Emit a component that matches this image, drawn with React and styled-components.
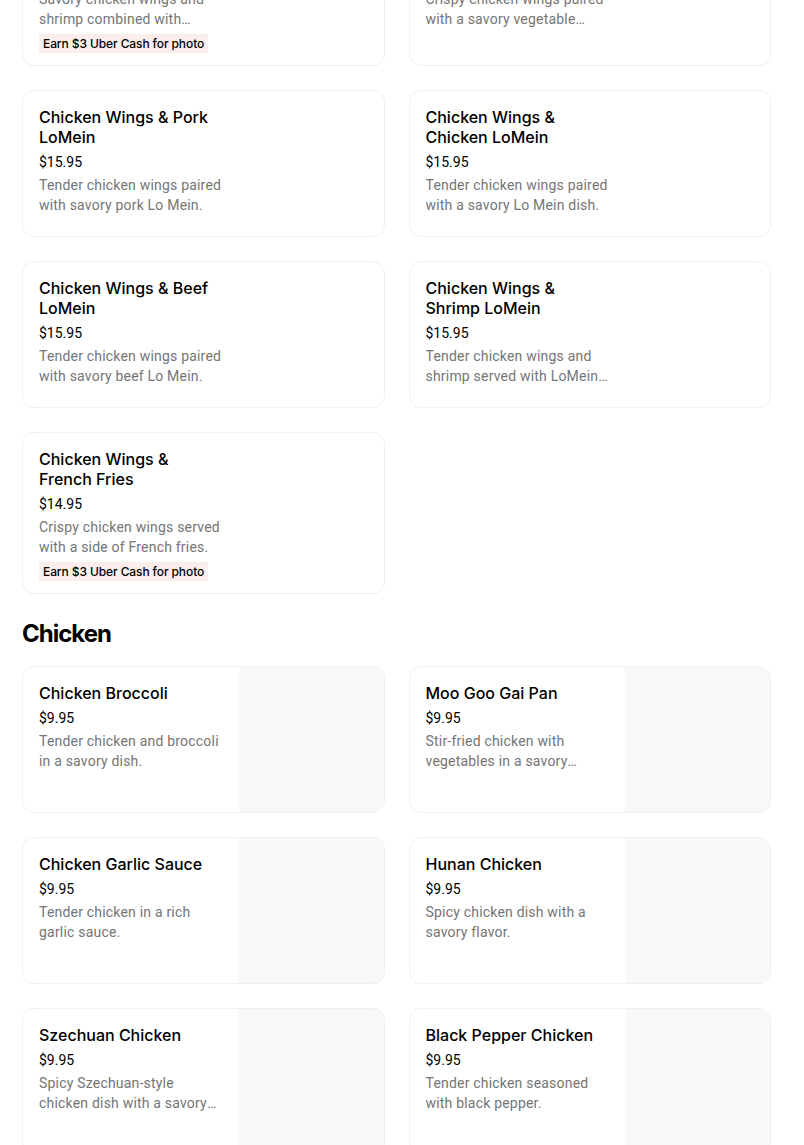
import styled, { createGlobalStyle } from "styled-components";

const GlobalStyle = createGlobalStyle`
  body {
    margin: 0;
    background: #ffffff;
    font-family: Inter, "Noto Sans", "Liberation Sans", sans-serif;
    color: #000000;
  }
`;

const Page = styled.div`
  padding: 0 33px 0 22px;
  margin-top: -96px;
`;

const Grid = styled.div`
  display: grid;
  grid-template-columns: 1fr 1fr;
  gap: 24px;
`;

const SectionTitle = styled.h2`
  margin: 24px 0 16px;
  font-size: 24px;
  line-height: 32px;
  font-weight: 700;
  letter-spacing: -1px;
`;

const Card = styled.div`
  display: grid;
  grid-template-columns: 1fr 145px;
  border: 1px solid #f0f0f0;
  border-radius: 12px;
  overflow: hidden;
  background: #ffffff;
`;

const Info = styled.div`
  display: flex;
  flex-direction: column;
  align-items: flex-start;
  gap: 4px;
  padding: 16px 16px 21px;
  min-width: 0;
`;

const Title = styled.div`
  font-size: 16px;
  line-height: 20px;
  font-weight: 500;
  color: #000000;
`;

const Price = styled.div`
  margin-top: 1px;
  font-family: Roboto, "Liberation Sans", sans-serif;
  font-size: 14px;
  line-height: 20px;
  color: #000000;
`;

const Desc = styled.div`
  margin-top: -1px;
  font-family: Roboto, "Liberation Sans", sans-serif;
  font-size: 14px;
  line-height: 20px;
  letter-spacing: 0.2px;
  color: #757575;
  display: -webkit-box;
  -webkit-line-clamp: 2;
  -webkit-box-orient: vertical;
  overflow: hidden;
`;

const Badge = styled.span`
  margin: 1px 0 -9px;
  padding: 0 4px;
  font-size: 12px;
  line-height: 19px;
  font-weight: 500;
  letter-spacing: -0.1px;
  background: #fdeeee;
  color: #000000;
`;

const Photo = styled.div`
  background: #f8f8f8;
  aspect-ratio: 1 / 1;
`;

const wings = [
  {
    title: "Chicken Wings & Shrimp Fried Rice",
    price: "$15.95",
    desc: "Savory chicken wings and shrimp combined with vegetable fried rice.",
    badge: true,
  },
  {
    title: "Chicken Wings & Vegetable LoMein",
    price: "$15.95",
    desc: "Crispy chicken wings paired with a savory vegetable LoMein noodles.",
  },
  {
    title: "Chicken Wings & Pork LoMein",
    price: "$15.95",
    desc: "Tender chicken wings paired with savory pork Lo Mein.",
  },
  {
    title: "Chicken Wings & Chicken LoMein",
    price: "$15.95",
    desc: "Tender chicken wings paired with a savory Lo Mein dish.",
  },
  {
    title: "Chicken Wings & Beef LoMein",
    price: "$15.95",
    desc: "Tender chicken wings paired with savory beef Lo Mein.",
  },
  {
    title: "Chicken Wings & Shrimp LoMein",
    price: "$15.95",
    desc: "Tender chicken wings and shrimp served with LoMein noodles.",
  },
  {
    title: "Chicken Wings & French Fries",
    price: "$14.95",
    desc: "Crispy chicken wings served with a side of French fries.",
    badge: true,
  },
];

const chicken = [
  {
    title: "Chicken Broccoli",
    price: "$9.95",
    desc: "Tender chicken and broccoli in a savory dish.",
    photo: true,
  },
  {
    title: "Moo Goo Gai Pan",
    price: "$9.95",
    desc: "Stir-fried chicken with vegetables in a savory mushroom sauce.",
    photo: true,
  },
  {
    title: "Chicken Garlic Sauce",
    price: "$9.95",
    desc: "Tender chicken in a rich garlic sauce.",
    photo: true,
  },
  {
    title: "Hunan Chicken",
    price: "$9.95",
    desc: "Spicy chicken dish with a savory flavor.",
    photo: true,
  },
  {
    title: "Szechuan Chicken",
    price: "$9.95",
    desc: "Spicy Szechuan-style chicken dish with a savory brown sauce.",
    photo: true,
  },
  {
    title: "Black Pepper Chicken",
    price: "$9.95",
    desc: "Tender chicken seasoned with black pepper.",
    photo: true,
  },
];

const MenuItem = ({ item }) => (
  <Card>
    <Info>
      <Title>{item.title}</Title>
      <Price>{item.price}</Price>
      <Desc>{item.desc}</Desc>
      {item.badge && <Badge>Earn $3 Uber Cash for photo</Badge>}
    </Info>
    {item.photo && <Photo />}
  </Card>
);

const App = () => {
  return (
    <>
      <GlobalStyle />
      <Page>
        <Grid>
          {wings.map((item, index) => (
            <MenuItem key={index} item={item} />
          ))}
        </Grid>
        <SectionTitle>Chicken</SectionTitle>
        <Grid>
          {chicken.map((item, index) => (
            <MenuItem key={index} item={item} />
          ))}
        </Grid>
      </Page>
    </>
  );
};

export default App;
